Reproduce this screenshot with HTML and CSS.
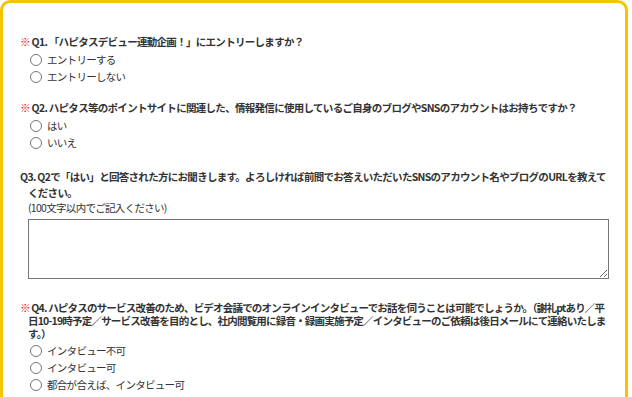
FILE: index.html
```html
<html>
<head>
    <link rel="stylesheet" href="styles.css">
</head>
<body>
    <div class="frame">
        <!-- Q1 -->
        <div class="q-block">
            <p class="question"><span class="req">※</span> Q1. 「ハピタスデビュー連動企画！」にエントリーしますか？</p>
            <label class="option"><input type="radio" name="q1"> エントリーする</label>
            <label class="option"><input type="radio" name="q1"> エントリーしない</label>
        </div>

        <!-- Q2 -->
        <div class="q-block">
            <p class="question"><span class="req">※</span> Q2. ハピタス等のポイントサイトに関連した、情報発信に使用しているご自身のブログやSNSのアカウントはお持ちですか？</p>
            <label class="option"><input type="radio" name="q2"> はい</label>
            <label class="option"><input type="radio" name="q2"> いいえ</label>
        </div>

        <!-- Q3 -->
        <div class="q-block free-text">
            <p class="question">Q3. Q2で「はい」と回答された方にお聞きします。よろしければ前問でお答えいただいたSNSのアカウント名やブログのURLを教えてください。</p>
            <p class="note">(100文字以内でご記入ください)</p>
            <textarea class="answer-box"></textarea>
        </div>

        <!-- Q4 -->
        <div class="q-block">
            <p class="question tight"><span class="req">※</span> Q4. ハピタスのサービス改善のため、ビデオ会議でのオンラインインタビューでお話を伺うことは可能でしょうか。（謝礼ptあり／平日10-19時予定／サービス改善を目的とし、社内閲覧用に録音・録画実施予定／インタビューのご依頼は後日メールにて連絡いたします。）</p>
            <label class="option"><input type="radio" name="q4"> インタビュー不可</label>
            <label class="option"><input type="radio" name="q4"> インタビュー可</label>
            <label class="option"><input type="radio" name="q4"> 都合が合えば、インタビュー可</label>
        </div>
    </div>
</body>
</html>
```

FILE: styles.css
```css
body {
    margin: 0;
    background: #fff;
    color: #333;
    font-family: "Noto Sans CJK JP", "Noto Sans", sans-serif;
    font-size: 10.5px;
    letter-spacing: -0.7px;
}
.frame {
    border: 3px solid #f5c400;
    border-bottom: none;
    border-radius: 10px 10px 0 0;
    width: 628px;
    box-sizing: border-box;
    padding: 31px 19px 0 17px;
    min-height: 420px;
}
.q-block {
    margin-bottom: 15px;
}
.q-block.free-text {
    margin-top: 18px;
    margin-bottom: 22px;
}
.question {
    margin: 0 0 1px;
    font-weight: bold;
    line-height: 16px;
    padding-left: 8px;
    text-indent: -8px;
}
.question.tight {
    line-height: 13px;
    letter-spacing: -0.8px;
    margin-bottom: 2px;
}
.req {
    color: #e60012;
    font-weight: normal;
}
.option {
    display: flex;
    align-items: center;
    height: 17px;
    padding-left: 10px;
}
.option input {
    width: 12px;
    height: 12px;
    margin: 0 5px 0 0;
}
.note {
    margin: 0 0 5px 8px;
    line-height: 12px;
}
.answer-box {
    display: block;
    margin-left: 8px;
    width: 581px;
    height: 60px;
    box-sizing: border-box;
    border: 1px solid #767676;
    resize: vertical;
}
```
